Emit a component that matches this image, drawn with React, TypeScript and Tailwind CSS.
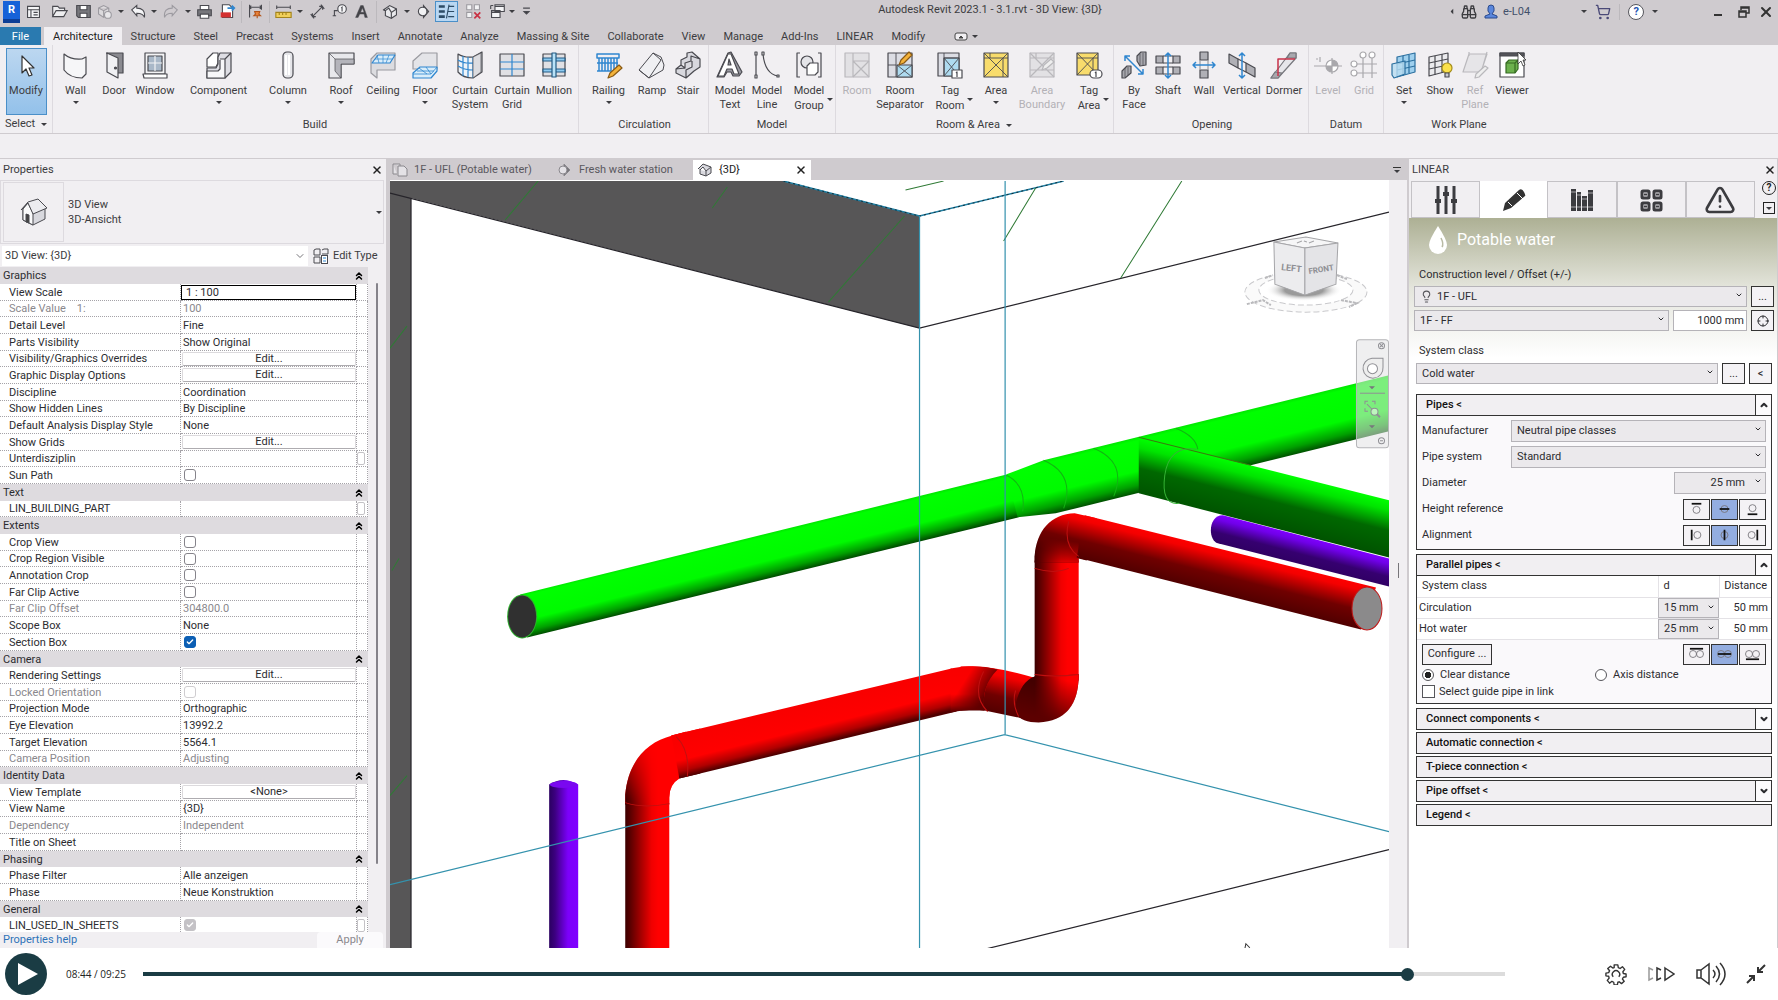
import { useState, type ReactNode } from "react";
import { Check, ChevronsUp, ChevronDown, ChevronUp, X, TriangleAlert, Lightbulb, Crosshair, ShoppingCart, Binoculars } from "lucide-react";

const INK = "#4a4a50";
const BLUE = "#2f86cf";
const PALE = "#d9edfa";

/* ---------- ribbon icons, all on a 28 x 28 grid ---------- */

const icons: Record<string, ReactNode> = {
  modify: <path d="M10 4v17l4-4 3 7 3-1-3-7h5z" fill="#fff" stroke="#333" />,
  wall: <path d="M2 3q7 6 18 5l4-2v17l-4 4Q8 27 2 19z" fill="#f6f6f8" />,
  door: (
    <>
      <path d="M6 2h17v20h-5" fill="#8a8a90" />
      <path d="M7 2l11 5v20L7 21z" fill="#f0f0f3" />
      <circle cx="15.500" cy="17" r="1" fill={INK} />
    </>
  ),
  window: (
    <>
      <path d="M4 2h20v21H4z" fill="#f4f4f6" />
      <path d="M7 5h14v15H7z" fill="#a9b8c8" />
      <path d="M14 5v15M7 12h14" stroke="#f4f4f6" />
      <path d="M2 23h24v4H3z" fill="#fff" />
    </>
  ),
  component: (
    <>
      <path d="M8 2h5v10l-2 4H2V8z" fill="#fff" />
      <path d="M15 2h11v19l-6 6H2V17h9l2-4V6z" fill="#dedee4" />
      <path d="M15 9v9l-2 2H2v7h18V8h-5M20 8l6-6" fill="#f7f7f9" />
    </>
  ),
  column: (
    <>
      <rect x="9" y="1" width="10" height="26" rx="4" fill="#e6e6ea" />
      <path d="M12 4v20M15 4v20" stroke="#fff" strokeWidth="2" />
    </>
  ),
  roof: (
    <>
      <path d="M2 2h25v11H14v14H2z" fill="#e8e8ec" />
      <path d="M2 2l6 6h19v5H14v14l-6-7V8" fill="#b4b4bb" strokeWidth="0.7" />
    </>
  ),
  ceiling: (
    <>
      <path d="M2 8l6-6h18v17H8v8l-6-5z" fill="#dcdce0" stroke="#9a9aa0" />
      <path d="M3 12L9 4h17l-5 8z" fill={PALE} stroke={BLUE} />
      <path d="M8 4l2 8M14 4v8M20 4l-3 8M6 8h17" stroke={BLUE} strokeWidth="0.7" />
    </>
  ),
  floor: (
    <>
      <path d="M2 10l9-8h15v16H2z" fill="#e4e4e8" stroke="#9a9aa0" />
      <path d="M2 25v-3l7-6h17v4l-6 7H2z" fill={PALE} stroke={BLUE} />
      <path d="M2 23h18l6-7M8 17l8 6M15 16l5 7M6 20h17" stroke={BLUE} strokeWidth="0.8" />
    </>
  ),
  curtainSystem: (
    <>
      <path d="M2 3q6 4 15 3l9-5v20l-9 6Q7 27 2 21z" fill="#eef3f8" />
      <path d="M7 5v20M12 6v20M17 6v21M2 9q6 4 15 3M2 15q6 4 15 4" stroke={BLUE} />
      <path d="M17 6l8-4v19l-8 6z" fill="#dcdce0" strokeWidth="0.7" />
    </>
  ),
  curtainGrid: (
    <>
      <path d="M2 3h24v22H2z" fill="#e0e0e4" />
      <path d="M14 3v22M2 11h24M2 18h24" stroke={BLUE} />
    </>
  ),
  mullion: (
    <>
      <path d="M3 3h22v22H3z" fill="#e0e0e4" />
      <path d="M3 7h22v3H3zM3 18h22v3H3z" fill="#8dcaf0" stroke="#245b84" />
      <path d="M12 2h4v24h-4z" fill="#b8e2f8" stroke="#245b84" />
    </>
  ),
  railing: (
    <>
      <path d="M2 3h22v4H2zM4 7v13M7 7v13M10 7v13M13 7v13M16 7v13M19 7v13M22 7v10M2 20h14M2 12h21" stroke={BLUE} strokeWidth="1.500" />
      <path d="M13 27l2-5 9-8 3 3-9 8z" fill="#f3b23a" stroke="#8a5a14" />
    </>
  ),
  ramp: <path d="M1 19L15 2l8 4 3 8-1 5-14 8zM1 19l10 8M15 2l8 7-12 18" fill="#f0f0f3" strokeWidth="1" />,
  stair: <path d="M2 18l5-4v-5l6-3V2l5-1 8 7v8l-6 4-8 7-10-5zM7 14l4 3v-5l6-2V5l9 3M11 17l-9 1M12 27v-8l6-3v-6" fill="#d8d8de" />,
  modelText: (
    <>
      <path d="M15 1l11 20-3 4h-6l-2-4h-4l-3 5H1L12 2z" fill="#9a9aa2" />
      <path d="M12 3h3l8 20h-5l-2-5h-5l-3 7H2zM12 14h3l-2-6z" fill="#fff" fillRule="evenodd" />
    </>
  ),
  modelLine: (
    <>
      <path d="M3 3v22M10 3q2 20 15 22" />
      <path d="M2 1h2v3H2zM2 24h2v3H2zM9 1h2v3H9zM24 24h2v2h-2z" fill="#fff" />
    </>
  ),
  modelGroup: (
    <>
      <path d="M5 2H2v24h3M23 2h3v24h-3" />
      <circle cx="12" cy="11" r="6" fill="#e4e4e8" />
      <path d="M12 15l3-3h8v9l-3 3h-8z" fill="#fff" />
    </>
  ),
  room: (
    <>
      <path d="M2 2h24v24H2z" fill="#e2e1e4" stroke="#b9b8bc" />
      <path d="M10 2v24M10 10h16M10 10l16 16M26 10L10 26" stroke="#b9b8bc" />
    </>
  ),
  roomSeparator: (
    <>
      <path d="M2 2h24v24H2z" fill="#dcdde4" />
      <path d="M11 14h15v12H11z" fill="#aedbf0" />
      <path d="M10 2v24M2 14h8M11 26l15-12M11 14l15 12" strokeWidth="0.9" />
      <path d="M13 14l2-5 8-8 3 3-8 8z" fill="#f3b23a" stroke="#8a5a14" />
    </>
  ),
  tagRoom: (
    <>
      <path d="M2 2h21v23H2z" fill="#dcdde4" />
      <path d="M8 7h15v18H8z" fill="#aedbf0" />
      <path d="M8 2v23M8 7h15M8 25L23 7M8 7l15 18" strokeWidth="0.9" />
      <rect x="16" y="19" width="10" height="8" fill="#fff" />
      <path d="M20 22l1-1v5" />
    </>
  ),
  area: (
    <>
      <path d="M2 2h24v24H2z" fill="#f8dc6c" />
      <path d="M2 2l24 24M26 2L2 26M2 7h24M8 2v5M21 7v19" strokeWidth="0.9" />
    </>
  ),
  areaBoundary: (
    <>
      <path d="M2 2h24v24H2z" fill="#e2e1e4" stroke="#b9b8bc" />
      <path d="M2 2l24 24M26 2L2 26M2 7h24M2 19h24M8 2v5" stroke="#b9b8bc" />
      <path d="M14 19l2-5 7-6 3 3-7 6z" fill="#eee" stroke="#b9b8bc" />
    </>
  ),
  tagArea: (
    <>
      <path d="M2 2h21v22H2z" fill="#f8dc6c" />
      <path d="M2 2l21 22M23 2L2 24M2 7h21M18 7v17" strokeWidth="0.9" />
      <rect x="15" y="19" width="12" height="8" rx="4" fill="#fff" />
      <path d="M20 22l1-1v5" />
    </>
  ),
  byFace: (
    <>
      <path d="M17 10V5l4-4h5v13l-6 1zM2 20l5-5h4v7l-6 5H2z" fill="#a8a8ae" />
      <path d="M20 3v11M23 2v12M5 17v9M8 16v8" strokeWidth="0.7" />
      <path d="M5 5l18 18M5 10V5h5M18 23h5v-5" stroke={BLUE} strokeWidth="1.500" />
    </>
  ),
  shaft: (
    <>
      <path d="M2 5h7v7H2zM19 5h7v7h-7zM2 16h7v7H2zM19 16h7v7h-7z" fill="#b0b0b6" />
      <path d="M9 5h10M9 12h10M9 16h10M9 23h10" />
      <path d="M14 2v25M11 5l3-3 3 3M11 24l3 3 3-3" stroke={BLUE} strokeWidth="1.500" />
    </>
  ),
  openWall: (
    <>
      <path d="M10 1h8v8h-8zM10 19h8v8h-8z" fill="#b0b0b6" />
      <path d="M10 9v10M18 9v10" stroke="#9a9aa0" />
      <path d="M3 14h22M6 11l-3 3 3 3M22 11l3 3-3 3" stroke={BLUE} strokeWidth="1.500" />
    </>
  ),
  vertical: (
    <>
      <path d="M1 3l9 5v9l-9-5zM18 12l9 5v9l-9-5z" fill="#b0b0b6" />
      <path d="M10 8l8 4M10 17l8 4" />
      <path d="M14 2v25M11 5l3-3 3 3M11 24l3 3 3-3" stroke={BLUE} strokeWidth="1.500" />
    </>
  ),
  dormer: (
    <>
      <path d="M1 27L20 2h6v5L8 27z" fill="#e6e6ea" stroke="#77777d" />
      <path d="M20 2h6v5h-9zM1 27l4-6 7 1-4 5z" fill="#a8a8ae" stroke="#77777d" />
      <path d="M8 25V8h17" stroke="#c8324a" strokeWidth="1.500" />
    </>
  ),
  level: (
    <>
      <circle cx="18" cy="15" r="6" fill="#fff" stroke="#a9a8ac" />
      <path d="M18 9v12a6 6 0 0 1-6-6h12a6 6 0 0 0-6-6z" fill="#a9a8ac" stroke="none" />
      <path d="M0 15h28M18 7v16M2 8h2M6 6v5" stroke="#a9a8ac" />
    </>
  ),
  grid: (
    <>
      <path d="M13 7v20M22 7v20M7 13h20M7 22h20" stroke="#a9a8ac" />
      <g fill="#fff" stroke="#a9a8ac">
        <circle cx="13" cy="4" r="3" />
        <circle cx="22" cy="4" r="3" />
        <circle cx="4" cy="13" r="3" />
        <circle cx="4" cy="22" r="3" />
      </g>
    </>
  ),
  set: (
    <>
      <path d="M7 6l18-4v19L7 26z" fill="#9fd0ee" stroke="#2b6f9f" />
      <path d="M13 5v20M19 4v18M7 13l18-4M7 19l18-4" stroke="#2b6f9f" />
      <path d="M2 13l13-3v13L4 27l-2-3z" fill="#b9dcf0" stroke="#2b6f9f" fillOpacity="0.800" />
    </>
  ),
  show: (
    <>
      <path d="M3 6l19-4v18L3 25z" fill="#ebebee" />
      <path d="M9 5v19M16 3v19M3 12l19-4M3 18l19-4" />
      <circle cx="21" cy="17" r="5" fill="#fbe14a" stroke="#a58d1c" />
      <path d="M19 22h4v4h-4z" fill="#c9c9ce" />
    </>
  ),
  refPlane: (
    <>
      <path d="M8 3h18l-6 18H2zM8 1v4M26 1L20 22" fill="#e6e5e8" stroke="#b9b8bc" />
      <path d="M14 27l1-4 9-8 3 2-9 9z" fill="#eee" stroke="#b9b8bc" />
    </>
  ),
  viewer: (
    <>
      <path d="M2 2h24v24H2z" fill="#fff" />
      <path d="M2 2h24v3H2z" fill="#55555a" />
      <path d="M8 12l3-3h9v9l-3 4H8z" fill="#6cb14d" stroke="#356a22" />
      <path d="M17 22V12h-9M17 12l3-3" stroke="#356a22" />
      <path d="M20 1v12l3-3 2 5 2-1-2-5h3z" fill="#fff" stroke="#333" strokeWidth="0.800" />
    </>
  ),
};

function Glyph({ name }: { name: string }) {
  return (
    <svg viewBox="0 0 28 28" className="w-7 h-7 shrink-0" fill="none" stroke={INK} strokeWidth="1.200" strokeLinejoin="round">
      {icons[name]}
    </svg>
  );
}

function Caret({ className = "" }: { className?: string }) {
  return (
    <svg viewBox="0 0 8 4" className={`w-[6px] h-[3px] ${className}`} fill="#3c3c40">
      <path d="M0 0h8L4 4z" />
    </svg>
  );
}

/* ---------- title bar ---------- */

interface QuickItem {
  name: string;
  width: string;
  art?: ReactNode;
  active?: boolean;
}

const gray = "#9c9aa0";

const quickItems: QuickItem[] = [
  { name: "Home", width: "w-[23px]", art: <><path d="M3 4h14v13H3zM3 8h14" fill="#f5f5f7" /><path d="M7 8v9M10 11h5M10 14h5" /></> },
  { name: "Open", width: "w-[29px]", art: <path d="M2 16V4h6l2 2h6v3M2 16L6 9h13l-4 7z" fill="#eeeef0" /> },
  { name: "Save", width: "w-[18px]", art: <><path d="M2 3h16v14H4l-2-2z" fill="#77777c" /><path d="M6 3h8v5H6zM6 12h8v5H6z" fill="#fff" /></> },
  { name: "Sync", width: "w-[24px]", art: <><path d="M3 6l6-3 6 3v7l-6 4-6-4zM3 6l6 3 6-3M9 9v8" stroke={gray} fill="#dcdadd" /><circle cx="14" cy="14" r="4" stroke={gray} fill="#e8e7ea" /></> },
  { name: "caret", width: "w-[9px]" },
  { name: "Undo", width: "w-[26px]", art: <path d="M2 8l6-5v3c6 0 10 3 9 11-1-4-4-5-9-5v3z" fill="#f5f5f7" /> },
  { name: "caret", width: "w-[6px]" },
  { name: "Redo", width: "w-[27px]", art: <path d="M18 8l-6-5v3C6 6 2 9 3 17c1-4 4-5 9-5v3z" stroke={gray} /> },
  { name: "caret", width: "w-[7px]" },
  { name: "Print", width: "w-[27px]", art: <><path d="M5 3h10v5H5zM5 13h10v5H5z" fill="#fff" /><path d="M2 8h16v7h-3v-2H5v2H2z" fill="#77777c" /></> },
  { name: "Export PDF", width: "w-[18px]", art: <><path d="M4 2h8l4 4v11H4z" fill="#fff" /><path d="M2 11h12v6H2z" fill="#d42f2f" stroke="none" /><path d="M10 6h7M15 3l3 3-3 3" stroke={BLUE} strokeWidth="2" /></> },
  { name: "sep", width: "w-[10px]" },
  { name: "Aligned Dimension", width: "w-[18px]", art: <><path d="M3 2v15M17 2v6M3 5h14M5 3L3 5l2 2M15 3l2 2-2 2" /><path d="M9 10h6l-1 3 2 2H8l2-2zM12 15v3" fill="#e8823a" stroke="#b3541a" /></> },
  { name: "sep", width: "w-[10px]" },
  { name: "Measure", width: "w-[19px]", art: <><path d="M2 5h16M2 3v4M18 3v4" /><path d="M1 11h18v6H1z" fill="#f0cf5a" stroke="#a3831c" /><path d="M5 11v3M9 11v3M13 11v3" stroke="#a3831c" /></> },
  { name: "caret", width: "w-[13px]" },
  { name: "Linear Dimension", width: "w-[22px]", art: <path d="M4 16L16 4M4 12v4h4M12 4h4v4M2 13l4 5M14 2l4 5" /> },
  { name: "Tag", width: "w-[22px]", art: <><circle cx="13" cy="7" r="5" fill="#f5f5f7" /><path d="M12 6l1-1v5M8 9H4v6M2 15h4" /></> },
  { name: "Text", width: "w-[22px]", art: <path d="M3 17L9 3h3l5 14h-3l-1-4H8l-2 4zM9 11h4l-2-5z" fill="#444448" fillRule="evenodd" strokeWidth="0.5" /> },
  { name: "sep", width: "w-[9px]" },
  { name: "3D View", width: "w-[19px]", art: <><path d="M2 8l7-5 8 4v7l-6 4-7-3V9z" fill="#e9e9ec" /><path d="M2 8l2 1 4-3 3 5 6-4M11 11v7" /></> },
  { name: "caret", width: "w-[13px]" },
  { name: "Section", width: "w-[20px]", art: <><path d="M10 3l6 7-6 7z" fill="#77777c" /><circle cx="9" cy="10" r="5" fill="#f1f1f3" /></> },
  { name: "Thin Lines", width: "w-[26px]", active: true, art: <><path d="M1 4h7M1 10h7M1 16h7" strokeWidth="3" stroke="#2d4c66" /><path d="M10 18l3-16M13 4h6M12 10h7M12 16h7" stroke="#2d4c66" /></> },
  { name: "Close Inactive", width: "w-[29px]", art: <><path d="M2 2h6v6H2zM11 2h6v6h-6zM2 11h6v6H2z" fill="#f3f3f5" stroke={gray} /><path d="M11 11l7 7M18 11l-7 7" stroke="#c83244" strokeWidth="2" /></> },
  { name: "Switch Windows", width: "w-[19px]", art: <path d="M7 2h11v8H7zM7 4h11M3 9h10v8H3zM3 11h10M2 3v4M2 3h3" fill="#f3f3f5" /> },
  { name: "caret", width: "w-[10px]" },
  { name: "Customize", width: "w-[18px]", art: <path d="M6 6h8M7 10h6l-3 3z" fill="#3c3c40" /> },
];

function TitleBar() {
  return (
    <header className="flex h-[27px] items-center">
      <div className="flex items-center pb-1">
        <button aria-label="Revit" className="mr-[2px] ml-[3px] h-[22px] w-[17px] bg-[#1662d8] border-b-4 border-[#0d3f96] text-[11px] leading-[18px] font-bold text-white">
          R
        </button>
        {quickItems.map((item, i) => {
          if (item.name === "sep") return <span key={i} className={`${item.width} flex justify-center`}><i className="h-[22px] w-px bg-[#bcb9bd]" /></span>;
          if (item.name === "caret") return <span key={i} className={`${item.width} flex justify-center`}><Caret /></span>;
          return (
            <button key={i} aria-label={item.name} className={`${item.width} flex justify-center`}>
              <span className={item.active ? "border border-[#4a8fc8] bg-[#b9d7f2] px-[2px] py-px" : ""}>
                <svg viewBox="0 0 20 20" className="w-[17px] h-[17px]" fill="none" stroke={INK} strokeWidth="1.300">{item.art}</svg>
              </span>
            </button>
          );
        })}
      </div>
      <h1 className="mb-2 flex-1 text-center">Autodesk Revit 2023.1 - 3.1.rvt - 3D View: {"{3D}"}</h1>
      <div className="flex w-[333px] items-center pr-1 mb-1">
        <Caret className="ml-1 rotate-90" />
        <button aria-label="Search" className="ml-[6px]"><Binoculars className="w-4 h-4" /></button>
        <button className="ml-[6px] flex items-center gap-1 text-[#42506a]">
          <svg viewBox="0 0 16 16" className="w-4 h-4" fill="#5a86dc" stroke="#2b4a8c">
            <path d="M5 4a3 3 0 0 1 6 0v3L9 10l5 2v2H2v-2l5-2-2-3z" />
          </svg>
          e-L04
        </button>
        <Caret className="ml-[51px]" />
        <button aria-label="App Store" className="ml-2"><ShoppingCart className="w-4 h-4 text-[#4b4a78]" /></button>
        <i className="mx-2 h-4 w-px bg-[#bcb9bd]" />
        <button aria-label="Help" className="flex h-4 w-4 items-center justify-center rounded-full border border-[#55555c] bg-white text-[11px] font-bold text-[#2456b4]">?</button>
        <Caret className="ml-2" />
        <button aria-label="Minimize" className="ml-auto flex h-4 w-4 items-end pb-1"><i className="h-[2px] w-2 bg-[#333]" /></button>
        <button aria-label="Restore" className="ml-[7px]">
          <svg viewBox="0 0 14 14" className="w-[14px] h-[14px]" fill="none" stroke="#333" strokeWidth="1.500"><path d="M4 5V2h8v6H9M2 6h7v6H2zM2 7h7M4 3h8" /></svg>
        </button>
        <button aria-label="Close" className="ml-[7px]"><X className="w-4 h-4 text-[#333]" strokeWidth={3} /></button>
      </div>
    </header>
  );
}

/* ---------- ribbon ---------- */

const ribbonTabs = ["Structure", "Steel", "Precast", "Systems", "Insert", "Annotate", "Analyze", "Massing & Site", "Collaborate", "View", "Manage", "Add-Ins", "LINEAR", "Modify"];

interface Tool {
  icon: string;
  label: string;
  second?: string;
  width: string;
  menu?: boolean;
  off?: boolean;
}

interface Panel {
  title: string;
  pad: string;
  menu?: boolean;
  tools: Tool[];
}

const panels: Panel[] = [
  {
    title: "Build",
    pad: "pl-[3px] pr-1",
    tools: [
      { icon: "wall", label: "Wall", width: "w-[39px]", menu: true },
      { icon: "door", label: "Door", width: "w-[38px]" },
      { icon: "window", label: "Window", width: "w-[44px]" },
      { icon: "component", label: "Component", width: "w-[83px]", menu: true },
      { icon: "column", label: "Column", width: "w-[56px]", menu: true },
      { icon: "roof", label: "Roof", width: "w-[50px]", menu: true },
      { icon: "ceiling", label: "Ceiling", width: "w-[34px]" },
      { icon: "floor", label: "Floor", width: "w-[50px]", menu: true },
      { icon: "curtainSystem", label: "Curtain", second: "System", width: "w-[40px]" },
      { icon: "curtainGrid", label: "Curtain", second: "Grid", width: "w-[44px]" },
      { icon: "mullion", label: "Mullion", width: "w-[40px]" },
    ],
  },
  {
    title: "Circulation",
    pad: "pl-[7px] pr-[5px]",
    tools: [
      { icon: "railing", label: "Railing", width: "w-[45px]", menu: true },
      { icon: "ramp", label: "Ramp", width: "w-[42px]" },
      { icon: "stair", label: "Stair", width: "w-[30px]" },
    ],
  },
  {
    title: "Model",
    pad: "px-[2px]",
    tools: [
      { icon: "modelText", label: "Model", second: "Text", width: "w-[38px]" },
      { icon: "modelLine", label: "Model", second: "Line", width: "w-[36px]" },
      { icon: "modelGroup", label: "Model", second: "Group", width: "w-[48px]", menu: true },
    ],
  },
  {
    title: "Room & Area",
    pad: "pl-[2px] pr-[3px]",
    menu: true,
    tools: [
      { icon: "room", label: "Room", width: "w-[38px]", off: true },
      { icon: "roomSeparator", label: "Room", second: "Separator", width: "w-[48px]" },
      { icon: "tagRoom", label: "Tag", second: "Room", width: "w-[52px]", menu: true },
      { icon: "area", label: "Area", width: "w-[40px]", menu: true },
      { icon: "areaBoundary", label: "Area", second: "Boundary", width: "w-[52px]", off: true },
      { icon: "tagArea", label: "Tag", second: "Area", width: "w-[42px]", menu: true },
    ],
  },
  {
    title: "Opening",
    pad: "pl-1 pr-[2px]",
    tools: [
      { icon: "byFace", label: "By", second: "Face", width: "w-[32px]" },
      { icon: "shaft", label: "Shaft", width: "w-[36px]" },
      { icon: "openWall", label: "Wall", width: "w-[36px]" },
      { icon: "vertical", label: "Vertical", width: "w-[40px]" },
      { icon: "dormer", label: "Dormer", width: "w-[44px]" },
    ],
  },
  {
    title: "Datum",
    pad: "px-px",
    tools: [
      { icon: "level", label: "Level", width: "w-[36px]", off: true },
      { icon: "grid", label: "Grid", width: "w-[36px]", off: true },
    ],
  },
  {
    title: "Work Plane",
    pad: "px-[2px]",
    tools: [
      { icon: "set", label: "Set", width: "w-[36px]", menu: true },
      { icon: "show", label: "Show", width: "w-[36px]" },
      { icon: "refPlane", label: "Ref", second: "Plane", width: "w-[34px]", off: true },
      { icon: "viewer", label: "Viewer", width: "w-[40px]" },
    ],
  },
];

function ToolButton({ tool }: { tool: Tool }) {
  return (
    <button className={`${tool.width} flex flex-col items-center ${tool.off ? "text-[#b3b1b6]" : ""}`}>
      <Glyph name={tool.icon} />
      <span className="mt-[5px] leading-[14px] whitespace-nowrap">{tool.label}</span>
      {tool.second && (
        <span className="flex items-center leading-[14px]">
          {tool.second}
          {tool.menu && <Caret className="-mr-[9px] ml-[3px] mb-3" />}
        </span>
      )}
      {tool.menu && !tool.second && <Caret className="mt-[3px]" />}
    </button>
  );
}

function Ribbon() {
  return (
    <>
      <nav className="flex h-[18px] items-stretch leading-[17px]">
        <button className="w-[41px] bg-[#2a7ab0] text-white">File</button>
        <button className="ml-[3px] bg-[#f1eff2] px-[9px] text-[#222]">Architecture</button>
        {ribbonTabs.map((tab) => (
          <button key={tab} className="px-[9px]">{tab}</button>
        ))}
        <button aria-label="Ribbon display" className="ml-5 flex items-center gap-1">
          <svg viewBox="0 0 14 9" className="w-[14px] h-[9px]" fill="none" stroke="#444"><rect x="1" y="1" width="12" height="7" rx="2" fill="#f1eff2" /><path d="M5 6h4L7 4z" fill="#444" /></svg>
          <Caret />
        </button>
      </nav>
      <section className="flex h-[89px] border-b border-[#cfcbcf] bg-[#f1eff2]">
        <div className="flex w-[53px] flex-col items-center border-r border-[#dddadf] pt-[3px]">
          <button className="flex h-[67px] w-[41px] flex-col items-center border border-[#4a8fc8] bg-linear-to-b from-[#bcd7f0] to-[#93c1ea] pt-[3px]">
            <Glyph name="modify" />
            <span className="mt-1 leading-[14px]">Modify</span>
          </button>
          <button className="mt-[2px] flex items-center gap-[6px] leading-[14px]">Select <Caret /></button>
        </div>
        {panels.map((panel) => (
          <div key={panel.title} className={`flex flex-col ${panel.title === "Work Plane" ? "" : "border-r border-[#dddadf]"} ${panel.pad} pt-[6px]`}>
            <div className="flex h-[67px] items-start">
              {panel.tools.map((tool) => <ToolButton key={tool.icon} tool={tool} />)}
            </div>
            <button className="flex items-center justify-center gap-[6px] leading-[14px]">
              {panel.title}
              {panel.menu && <Caret />}
            </button>
          </div>
        ))}
      </section>
      <div className="h-6 bg-[#f1eff2]" />
    </>
  );
}

/* ---------- properties palette ---------- */

type Kind = "group" | "text" | "button" | "check" | "scale";

interface Row {
  name: string;
  kind: Kind;
  value?: string;
  dim?: boolean;
  on?: boolean;
  more?: boolean;
}

const rows: Row[] = [
  { name: "Graphics", kind: "group" },
  { name: "View Scale", kind: "scale", value: "1 : 100" },
  { name: "Scale Value    1:", kind: "text", value: "100", dim: true },
  { name: "Detail Level", kind: "text", value: "Fine" },
  { name: "Parts Visibility", kind: "text", value: "Show Original" },
  { name: "Visibility/Graphics Overrides", kind: "button", value: "Edit..." },
  { name: "Graphic Display Options", kind: "button", value: "Edit..." },
  { name: "Discipline", kind: "text", value: "Coordination" },
  { name: "Show Hidden Lines", kind: "text", value: "By Discipline" },
  { name: "Default Analysis Display Style", kind: "text", value: "None" },
  { name: "Show Grids", kind: "button", value: "Edit..." },
  { name: "Unterdisziplin", kind: "text", more: true },
  { name: "Sun Path", kind: "check" },
  { name: "Text", kind: "group" },
  { name: "LIN_BUILDING_PART", kind: "text", more: true },
  { name: "Extents", kind: "group" },
  { name: "Crop View", kind: "check" },
  { name: "Crop Region Visible", kind: "check" },
  { name: "Annotation Crop", kind: "check" },
  { name: "Far Clip Active", kind: "check" },
  { name: "Far Clip Offset", kind: "text", value: "304800.0", dim: true },
  { name: "Scope Box", kind: "text", value: "None" },
  { name: "Section Box", kind: "check", on: true },
  { name: "Camera", kind: "group" },
  { name: "Rendering Settings", kind: "button", value: "Edit..." },
  { name: "Locked Orientation", kind: "check", dim: true },
  { name: "Projection Mode", kind: "text", value: "Orthographic" },
  { name: "Eye Elevation", kind: "text", value: "13992.2" },
  { name: "Target Elevation", kind: "text", value: "5564.1" },
  { name: "Camera Position", kind: "text", value: "Adjusting", dim: true },
  { name: "Identity Data", kind: "group" },
  { name: "View Template", kind: "button", value: "<None>" },
  { name: "View Name", kind: "text", value: "{3D}" },
  { name: "Dependency", kind: "text", value: "Independent", dim: true },
  { name: "Title on Sheet", kind: "text" },
  { name: "Phasing", kind: "group" },
  { name: "Phase Filter", kind: "text", value: "Alle anzeigen" },
  { name: "Phase", kind: "text", value: "Neue Konstruktion" },
  { name: "General", kind: "group" },
  { name: "LIN_USED_IN_SHEETS", kind: "check", on: true, more: true },
];

function RowValue({ row }: { row: Row }) {
  if (row.kind === "scale") {
    return (
      <select aria-label={row.name} className="block h-[15px] w-full appearance-none border border-black bg-white px-1 leading-[13px]">
        <option>{row.value}</option>
      </select>
    );
  }
  if (row.kind === "button") {
    return <button aria-label={row.name} className="mx-px block h-[14px] w-[174px] rounded-xs border border-[#dcdadd] border-b-[#aeacb0] bg-white leading-[12px]">{row.value}</button>;
  }
  if (row.kind === "check") {
    const locked = row.name.startsWith("LIN");
    return (
      <span className="ml-[3px] grid h-3 w-3">
        <input
          type="checkbox"
          aria-label={row.name}
          defaultChecked={row.on}
          disabled={row.dim || locked}
          className={`col-start-1 row-start-1 h-3 w-3 appearance-none rounded-[3px] border ${row.dim ? "border-[#cfcdd0]" : "border-[#85838a]"} checked:border-[#0c5fb4] checked:bg-[#0c5fb4] disabled:checked:border-[#c4c2c6] disabled:checked:bg-[#c4c2c6]`}
        />
        {row.on && <Check className="pointer-events-none col-start-1 row-start-1 m-[2px] h-2 w-2 text-white" strokeWidth={4} />}
      </span>
    );
  }
  return <span className="pl-[2px]">{row.value}</span>;
}

function Properties() {
  return (
    <aside className="flex w-[390px] shrink-0 flex-col border-r-4 border-[#cfcbcf] bg-[#f1eff2]">
      <div className="flex h-[21px] items-center justify-between pr-[3px] pl-[3px]">
        <h2>Properties</h2>
        <button aria-label="Close properties"><X className="h-3 w-3 text-[#222]" strokeWidth={3} /></button>
      </div>
      <button className="mr-[2px] flex h-16 items-center border border-[#dddadf] pr-px text-left">
        <span className="ml-[2px] flex h-[60px] w-[61px] items-center justify-center border border-[#dddadf]">
          <svg viewBox="0 0 28 28" className="h-7 w-7" fill="none" stroke={INK}>
            <path d="M3 11v11l10 5 12-6V10" fill="#d8d8de" />
            <path d="M13 15v12L3 22V11l5-6z" fill="#fafafb" />
            <path d="M1 12L8 4l10-3 9 9-14 6L8 5z" fill="#ececf0" />
            <path d="M6 16l3 1v8l-3-1z" fill="#444" />
          </svg>
        </span>
        <span className="ml-1 flex-1 text-[11px] leading-[15px]">3D View<br />3D-Ansicht</span>
        <Caret />
      </button>
      <div className="flex h-[23px] items-center">
        <div className="relative ml-[2px] w-[306px]">
          <select aria-label="View instance" className="h-5 w-full appearance-none bg-white px-[3px]">
            <option>3D View: {"{3D}"}</option>
          </select>
          <ChevronDown className="pointer-events-none absolute top-1 right-[2px] h-3 w-3 text-[#77757a]" />
        </div>
        <button className="ml-[5px] flex items-center gap-1">
          <svg viewBox="0 0 16 16" className="h-4 w-4" fill="none" stroke={INK}>
            <path d="M1 2l2-1h4v6H1zM9 2l2-1h4v5H9M1 9h6v6H1z" />
            <rect x="8.500" y="7.500" width="6" height="8" fill="#fff" />
            <path d="M10 10h3M10 13h3" stroke={BLUE} />
          </svg>
          Edit Type
        </button>
      </div>
      <div className="flex min-h-0 flex-1 overflow-hidden">
        <div className="overflow-hidden">
          <table className="w-[368px] table-fixed border-separate border-spacing-0 bg-white leading-[15px] text-[#2c2c30]">
            <colgroup>
              <col className="w-[181px]" />
              <col className="w-[176px]" />
              <col className="w-[11px]" />
            </colgroup>
            <tbody>
              {rows.map((row) =>
                row.kind === "group" ? (
                  <tr key={row.name} className="h-[17px] bg-[#dedbdf] nth-[3n]:h-4">
                    <th colSpan={3} scope="colgroup" className="p-0 pr-[3px] pl-[3px] text-left font-normal">
                      <span className="flex items-center justify-between">
                        {row.name}
                        <button aria-label={`Collapse ${row.name}`}><ChevronsUp className="h-3 w-3 text-black" strokeWidth={3} /></button>
                      </span>
                    </th>
                  </tr>
                ) : (
                  <tr key={row.name} className={`h-[17px] nth-[3n]:h-4 ${row.dim ? "text-[#8a888d]" : ""}`}>
                    <th scope="row" className="border-r border-b border-dotted border-[#a5a3a8] p-0 pl-[9px] text-left font-normal whitespace-pre">{row.name}</th>
                    <td className="border-r border-b border-dotted border-[#a5a3a8] p-0"><RowValue row={row} /></td>
                    <td className="border-r border-b border-dotted border-[#a5a3a8] p-0">
                      {row.more && <button aria-label={`Browse ${row.name}`} className="block h-[13px] w-2 rounded-xs border border-[#c4c2c6] bg-white" />}
                    </td>
                  </tr>
                )
              )}
            </tbody>
          </table>
        </div>
        <div className="mt-4 mb-[68px] ml-2 w-[2px] rounded-full bg-[#85838a]" />
      </div>
      <div className="flex h-4 items-start justify-between pr-[3px] pl-[3px]">
        <a href="#help" className="leading-4 text-[#2f73b8]">Properties help</a>
        <button className="h-4 w-[66px] rounded-t-sm bg-[#fbfafc] leading-4 text-[#8a888d]">Apply</button>
      </div>
    </aside>
  );
}

/* ---------- 3D view ---------- */

function Stops({ list }: { list: [number, string][] }) {
  return (
    <>
      {list.map(([offset, color]) => <stop key={offset} offset={offset} stopColor={color} />)}
    </>
  );
}

const GREEN: [number, string][] = [[0, "#00e800"], [0.06, "#00ff00"], [0.6, "#00fa00"], [0.85, "#00a000"], [1, "#004c00"]];
const GREEN_DARK: [number, string][] = [[0, "#00ff00"], [0.18, "#00e400"], [0.55, "#006800"], [1, "#005400"]];
const RED: [number, string][] = [[0, "#f80000"], [0.6, "#ff0000"], [0.85, "#b00000"], [1, "#500000"]];
const RED_DARK: [number, string][] = [[0, "#ff0000"], [0.15, "#f40000"], [0.6, "#700000"], [1, "#520000"]];
const RED_UP: [number, string][] = [[0, "#3c0000"], [0.12, "#5c0000"], [0.6, "#f00000"], [0.75, "#ff0000"], [1, "#ff0000"]];

function Scene() {
  return (
    <svg viewBox="390 181 998 767" preserveAspectRatio="xMinYMin slice" className="h-full w-full" role="img" aria-label="3D pipe model" fill="none">
      <defs>
        <linearGradient id="g1" gradientUnits="userSpaceOnUse" x1="760" y1="535" x2="770.400" y2="577.400"><Stops list={GREEN} /></linearGradient>
        <linearGradient id="g2" gradientUnits="userSpaceOnUse" x1="1300" y1="397" x2="1313" y2="450"><Stops list={GREEN} /></linearGradient>
        <linearGradient id="g3" gradientUnits="userSpaceOnUse" x1="1260" y1="468" x2="1247" y2="520"><Stops list={GREEN_DARK} /></linearGradient>
        <linearGradient id="r1" gradientUnits="userSpaceOnUse" x1="1200" y1="543" x2="1189.400" y2="585.400"><Stops list={RED_DARK} /></linearGradient>
        <linearGradient id="r2" gradientUnits="userSpaceOnUse" x1="800" y1="703" x2="810.400" y2="745"><Stops list={RED} /></linearGradient>
        <linearGradient id="r3" gradientUnits="userSpaceOnUse" x1="625" y1="0" x2="669" y2="0"><Stops list={RED_UP} /></linearGradient>
        <linearGradient id="r4" gradientUnits="userSpaceOnUse" x1="1034" y1="0" x2="1078" y2="0"><Stops list={RED_UP} /></linearGradient>
        <linearGradient id="r5" gradientUnits="userSpaceOnUse" x1="1010" y1="671" x2="1000" y2="714"><Stops list={RED_DARK} /></linearGradient>
        <linearGradient id="r6" gradientUnits="userSpaceOnUse" x1="0" y1="666" x2="0" y2="712"><Stops list={RED} /></linearGradient>
        <linearGradient id="p1" gradientUnits="userSpaceOnUse" x1="549" y1="0" x2="578" y2="0"><Stops list={[[0, "#2a0060"], [0.2, "#3c0080"], [0.65, "#7c00fa"], [1, "#8000ff"]]} /></linearGradient>
        <linearGradient id="p2" gradientUnits="userSpaceOnUse" x1="1300" y1="535" x2="1293" y2="562"><Stops list={[[0, "#8000ff"], [0.2, "#7000e8"], [0.65, "#360070"], [1, "#300064"]]} /></linearGradient>
        <linearGradient id="f1" gradientUnits="userSpaceOnUse" x1="668" y1="744" x2="652" y2="806"><stop offset="0" stopColor="#000" /><stop offset="1" stopColor="#fff" /></linearGradient>
        <linearGradient id="f2" gradientUnits="userSpaceOnUse" x1="1040" y1="718" x2="1052" y2="676"><stop offset="0" stopColor="#000" /><stop offset="1" stopColor="#fff" /></linearGradient>
        <linearGradient id="f3" gradientUnits="userSpaceOnUse" x1="1066" y1="540" x2="1062" y2="566"><stop offset="0" stopColor="#000" /><stop offset="1" stopColor="#fff" /></linearGradient>
        <linearGradient id="f4" gradientUnits="userSpaceOnUse" x1="964" y1="680" x2="986" y2="694"><stop offset="0" stopColor="#000" /><stop offset="1" stopColor="#fff" /></linearGradient>
        <mask id="m1" maskUnits="userSpaceOnUse" x="380" y="170" width="1020" height="790"><path d="M380 170h1020v790H380z" fill="url(#f1)" /></mask>
        <mask id="m2" maskUnits="userSpaceOnUse" x="380" y="170" width="1020" height="790"><path d="M380 170h1020v790H380z" fill="url(#f2)" /></mask>
        <mask id="m3" maskUnits="userSpaceOnUse" x="380" y="170" width="1020" height="790"><path d="M380 170h1020v790H380z" fill="url(#f3)" /></mask>
        <mask id="m4" maskUnits="userSpaceOnUse" x="380" y="170" width="1020" height="790"><path d="M380 170h1020v790H380z" fill="url(#f4)" /></mask>
        <radialGradient id="shade"><stop offset="0.500" stopColor="#9a9a9a" /><stop offset="1" stopColor="#fff" stopOpacity="0" /></radialGradient>
      </defs>
      <path d="M380 170h1020v790H380z" fill="#fff" />

      {/* slab and wall */}
      <path d="M390 181H783L919 216V328L411 198V948H390z" fill="#575657" />
      <path d="M390 193L919 328L1388 212M411 198V948M986 948L1388 849" stroke="#26242a" strokeWidth="1.200" />
      <path d="M783 181L919 216L1063 181" stroke="#1f7fa3" strokeWidth="1.500" />
      <path d="M783 181L919 216L1063 181" stroke="#12303c" strokeDasharray="2 3" />
      <path d="M505 220L538 181M712 208L727 187M828 302L904 216M390 348L407 326M392 570L399 558M390 795L407 775M905 190L943 181M1003 241L1035 188M1120 278L1181 181" stroke="#2f7a35" />

      {/* cold water */}
      <path d="M520 594L1007 474L1018 517L527 637z" fill="url(#g1)" />
      <path d="M1006 474L1043 460L1388 375V431L1055 513L1017 517z" fill="url(#g2)" />
      <ellipse cx="522" cy="616" rx="15" ry="22" fill="#2fae2f" />
      <ellipse cx="522" cy="616" rx="14" ry="21" fill="#303030" />
      <path d="M1006 475q20 10 16 36M1043 460q32 14 20 48M1093 448q34 14 20 48M1175 428q20 8 22 21" stroke="#12b412" />
      <path d="M1138 437L1388 500V557L1138 493z" fill="url(#g3)" />
      <path d="M1138 437L1250 465" stroke="#3a7a10" />
      <path d="M1196 449q-28-4-32 26t14 28" stroke="#35b435" />

      {/* circulation */}
      <path d="M1222 515L1388 558V586L1217 543C1207 540 1207 515 1222 515z" fill="url(#p2)" />
      <path d="M549 784q14-9 29 0V948H549z" fill="url(#p1)" />
      <ellipse cx="563.500" cy="784" rx="14" ry="3.500" fill="#7a08f0" />

      {/* hot water */}
      <path d="M1034 560H1078V680H1034z" fill="url(#r4)" />
      <path d="M1034 562V556C1036 530 1050 514 1074 513L1096 518L1086 560L1078 558V562z" fill="url(#r1)" />
      <path d="M1034 562V556C1036 530 1050 514 1074 513L1078 514V562z" fill="url(#r4)" mask="url(#m3)" />
      <path d="M1084 515L1375 587L1360 629L1076 557z" fill="url(#r1)" />
      <path d="M960 666Q990 664 1033 677L1063 707Q1047 726 1018 717L984 710H960z" fill="url(#r5)" />
      <path d="M1078 674q0 46-40 48-20 0-24-12 4-28 20-34z" fill="#5c0000" />
      <path d="M1078 674q0 46-40 48-20 0-24-12 4-28 20-34z" fill="url(#r4)" mask="url(#m2)" />
      <path d="M671 735L951 668L956 711L679 778z" fill="url(#r2)" />
      <path d="M950 668Q975 663 997 669Q980 686 984 710Q970 708 950 712z" fill="url(#r6)" />
      <path d="M950 668Q975 663 997 669Q980 686 984 710Q970 708 950 712z" fill="#600000" mask="url(#m4)" />
      <path d="M625 804V794C628 762 645 742 672 735L686 731L679 778Q669 784 669 797V804z" fill="#ff0000" />
      <path d="M671 735L700 728V773L679 778z" fill="url(#r2)" />
      <path d="M625 804V794C628 762 645 742 672 735L679 778Q669 784 669 797V804z" fill="url(#r3)" mask="url(#m1)" />
      <path d="M625 803H669V948H625z" fill="url(#r3)" />
      <ellipse cx="1366" cy="608" rx="15" ry="21.500" fill="#8b8a8b" stroke="#c01818" />
      <path d="M1068 521q-6 24 10 35M1034 568q20 6 34 0M1034 674q20 3 44 0M625 802q18 6 44 1M676 736q14 14 11 40M983 671q-12 24 4 40M1015 690q-4 12 3 26" stroke="#c01010" />

      {/* section box */}
      <path d="M919 216V948M1004.500 181V734M390 884L1004 734L1388 831" stroke="#3492ad" strokeWidth="1.200" />
      <path d="M1244 948l1-5 4 4" stroke="#333" />

      {/* view cube */}
      <g>
        <ellipse cx="1305" cy="292" rx="61" ry="20" fill="#fafafa" stroke="#c9c9cc" strokeDasharray="6 3" />
        <ellipse cx="1305" cy="290" rx="47" ry="15" fill="#fff" stroke="#c9c9cc" strokeDasharray="6 3" />
        <ellipse cx="1303" cy="290" rx="38" ry="11" fill="url(#shade)" />
        <path d="M1246 304l16-4 8 5M1340 300l16 3-8 4M1264 278l8-3M1336 275l10 4" stroke="#b9b9bc" strokeWidth="2" strokeDasharray="3 1" />
        <path d="M1273 242L1305 237L1337 243L1304 248z" fill="#f6f6f7" stroke="#a5a5a8" />
        <path d="M1273 242L1304 248V295L1274 284z" fill="#ececee" stroke="#a5a5a8" />
        <path d="M1304 248L1337 243L1335 284L1304 295z" fill="#e4e4e7" stroke="#a5a5a8" />
        <text x="1280" y="270" fill="#8f8f94" className="text-[9px] font-bold" transform="rotate(6 1280 270)">LEFT</text>
        <text x="1308" y="274" fill="#8f8f94" className="text-[8px] font-bold" transform="rotate(-9 1308 274)">FRONT</text>
        <path d="M1296 243l5-2M1303 241l3 1M1308 243l5-2" stroke="#a5a5a8" />
      </g>

      {/* navigation bar */}
      <g stroke="#8f8f94">
        <rect x="1355.500" y="339.500" width="32" height="108" rx="3" fill="#e2e2e4" fillOpacity="0.550" stroke="#b5b5b8" />
        <circle cx="1380.500" cy="345.500" r="3" />
        <path d="M1379 344l3 3M1382 344l-3 3" />
        <path d="M1371 358h11v9a10 10 0 1 1-11-9z" fill="#eee" />
        <circle cx="1371.500" cy="368.500" r="5" fill="#fff" />
        <path d="M1359 393h25" />
        <path d="M1368 386h6l-3 3zM1368 425h6l-3 3z" fill="#77777c" stroke="none" />
        <path d="M1364 404v-3h3M1371 401h3v3M1364 408v3h3M1366 404l6 6" />
        <circle cx="1373.500" cy="411.500" r="3.500" fill="#fff" fillOpacity="0.500" />
        <path d="M1376 414l3 3" strokeWidth="2" />
        <circle cx="1380.500" cy="440.500" r="3" />
        <path d="M1379 440.500h3" />
      </g>
    </svg>
  );
}

function Viewport() {
  return (
    <main className="flex min-w-0 flex-1 flex-col bg-[#f1eff2]">
      <div className="flex h-[21px] items-center bg-[#cfcbcf] pt-px text-[#5a585e]">
        <button className="flex items-center gap-[6px] pl-[2px]">
          <svg viewBox="0 0 16 14" className="h-[14px] w-4" fill="none" stroke="#8a888d"><path d="M1 1h7v2M1 1v10h4M6 3h6l3 3v7H6z" fill="#e4e2e6" /></svg>
          <span className="w-[142px] text-left">1F - UFL (Potable water)</span>
        </button>
        <button className="flex items-center gap-[7px]">
          <svg viewBox="0 0 16 14" className="h-[14px] w-4" fill="none" stroke="#8a888d"><path d="M8 1l6 6-6 6z" fill="#77757a" /><circle cx="7" cy="7" r="4" fill="#e4e2e6" /></svg>
          <span className="w-[109px] text-left">Fresh water station</span>
        </button>
        <div className="ml-[5px] flex h-5 w-[118px] items-center bg-white pr-1 pl-1 text-[#222]">
          <svg viewBox="0 0 16 14" className="h-[14px] w-4" fill="#d8d8de" stroke={INK}><path d="M1 6l5-5 8 3v6l-5 3-6-2V6M9 13V8l5-4M9 8L6 4 3 7" /></svg>
          <button className="ml-[6px] flex-1 text-left">{"{3D}"}</button>
          <button aria-label="Close view"><X className="h-3 w-3" strokeWidth={3} /></button>
        </div>
        <button aria-label="View list" className="ml-auto flex w-5 flex-col items-center gap-[2px]">
          <i className="h-px w-2 bg-[#333]" />
          <Caret />
        </button>
      </div>
      <div className="flex min-h-0 flex-1">
        <div className="flex min-w-0 flex-1 flex-col border-t border-white"><Scene /></div>
        <div className="flex w-[18px] items-center justify-center pt-3">
          <i className="h-[15px] w-px bg-[#77757a]" />
        </div>
      </div>
    </main>
  );
}

/* ---------- LINEAR palette ---------- */

interface DropProps {
  label: string;
  value: string;
  className: string;
  pad?: string;
  children?: ReactNode;
}

function Drop({ label, value, className, pad = "pl-[5px] pr-4", children }: DropProps) {
  return (
    <div className={`relative ${className}`}>
      <select id={label} aria-label={label} className={`block h-full w-full appearance-none border border-[#b5b3b8] bg-[#ebe9ec] ${pad}`}>
        <option>{value}</option>
      </select>
      {children}
      <ChevronDown className="pointer-events-none absolute top-[5px] right-1 h-2 w-2" strokeWidth={3} />
    </div>
  );
}

function SmallButton({ label, children }: { label: string; children: ReactNode }) {
  return (
    <button aria-label={label} className="flex h-[21px] w-[23px] shrink-0 items-center justify-center border border-[#333] bg-[#f4f2f5]">{children}</button>
  );
}

const choices: Record<string, string[]> = {
  height: ["M3 2h11M8.500 9m-4 0a4 4 0 1 0 8 0a4 4 0 1 0-8 0", "M3 8h11M8.500 8m-4 0a4 4 0 1 0 8 0a4 4 0 1 0-8 0", "M3 14h11M8.500 7m-4 0a4 4 0 1 0 8 0a4 4 0 1 0-8 0"],
  align: ["M3 2v12M9.500 8m-4 0a4 4 0 1 0 8 0a4 4 0 1 0-8 0", "M8.500 2v12M8.500 8m-4 0a4 4 0 1 0 8 0a4 4 0 1 0-8 0", "M14 2v12M7.500 8m-4 0a4 4 0 1 0 8 0a4 4 0 1 0-8 0"],
  pair: [
    "M1 2h15M4.500 8m-4 0a4 4 0 1 0 8 0a4 4 0 1 0-8 0M12.500 8m-4 0a4 4 0 1 0 8 0a4 4 0 1 0-8 0",
    "M1 8h15M4.500 8m-4 0a4 4 0 1 0 8 0a4 4 0 1 0-8 0M12.500 8m-4 0a4 4 0 1 0 8 0a4 4 0 1 0-8 0",
    "M1 14h15M4.500 8m-4 0a4 4 0 1 0 8 0a4 4 0 1 0-8 0M12.500 8m-4 0a4 4 0 1 0 8 0a4 4 0 1 0-8 0",
  ],
};

function ChoiceButtons({ kind }: { kind: string }) {
  const [picked, setPicked] = useState(1);
  return (
    <div className="flex gap-px">
      {choices[kind].map((d, i) => {
        const cut = d.indexOf("M", 1);
        return (
          <button
            key={i}
            aria-label={`${kind} option ${i + 1}`}
            onClick={() => setPicked(i)}
            className={`flex h-[21px] w-[27px] items-center justify-center border border-[#333] ${picked === i ? "bg-[#93ade0]" : "bg-[#f4f2f5]"}`}
          >
            <svg viewBox="0 0 17 16" className="h-[14px] w-[15px]" fill="none">
              <path d={d.slice(cut)} stroke="#77757a" />
              <path d={d.slice(0, cut)} stroke="#111" strokeWidth="2" />
            </svg>
          </button>
        );
      })}
    </div>
  );
}

function SectionHead({ title, toggle }: { title: string; toggle?: "up" | "down" }) {
  return (
    <div className="flex h-5 items-stretch bg-[#f1eff2]">
      <button className="flex-1 pl-[9px] text-left font-medium text-[#111]">{title} &lt;</button>
      {toggle && (
        <button aria-label={`Toggle ${title}`} className="flex w-4 items-center justify-center border-l border-[#333] bg-[#fbfafc]">
          {toggle === "up" ? <ChevronUp className="h-[10px] w-[10px]" strokeWidth={5} /> : <ChevronDown className="h-[10px] w-[10px]" strokeWidth={5} />}
        </button>
      )}
    </div>
  );
}

function PanelTabs() {
  const tab = "flex flex-1 items-center justify-center border border-[#c4c2c6]";
  return (
    <div className="flex h-[37px]">
      <button aria-label="Settings" className={tab}>
        <svg viewBox="0 0 24 28" className="h-7 w-6" stroke="#3c3c40" strokeWidth="4"><path d="M4 0v28M12 0v28M20 0v28" strokeWidth="3" /><path d="M1 15h6M9 8h6M17 15h6" /></svg>
      </button>
      <button aria-label="Draw" className="flex flex-1 items-center justify-center bg-white">
        <svg viewBox="0 0 24 24" className="h-6 w-6" fill="#333"><path d="M1 23l2-8L17 2q3-2 5 2t1 4L9 20z" /><path d="M15 5l6 6M6 14l4 4" stroke="#fff" /></svg>
      </button>
      <button aria-label="Library" className={tab}>
        <svg viewBox="0 0 24 24" className="h-6 w-6" fill="#3c3c40"><path d="M1 1h5v22H1zM7 4h4v19H7zM12 8h5v15h-5zM18 2h5v21h-5z" /><path d="M1 4h5M7 7h4M12 11h5M18 5h5M1 19h22" stroke="#f1eff2" strokeWidth="0.600" /></svg>
      </button>
      <button aria-label="Calculate" className={tab}>
        <svg viewBox="0 0 24 24" className="h-6 w-6" fill="none" stroke="#3c3c40" strokeWidth="3"><rect x="3" y="3" width="7" height="7" rx="1" /><rect x="15" y="3" width="7" height="7" rx="1" /><rect x="3" y="15" width="7" height="7" rx="1" /><rect x="15" y="15" width="7" height="7" rx="1" /><path d="M5 6.500h3M17 6.500h3M5 18.500h3M17 18.500h3" strokeWidth="2" /></svg>
      </button>
      <button aria-label="Warnings" className={tab}><TriangleAlert className="h-8 w-8 text-[#3c3c40]" /></button>
      <div className="flex w-[22px] shrink-0 flex-col items-center justify-between pb-1 pl-[6px]">
        <button aria-label="Help" className="flex h-[14px] w-[14px] items-center justify-center rounded-full border border-[#222] text-[10px] font-bold text-[#222]">?</button>
        <button aria-label="Options" className="flex h-3 w-3 items-center justify-center border border-[#222]"><Caret /></button>
      </div>
    </div>
  );
}

const parallelRows = [
  { system: "Circulation", d: "15 mm", distance: "50 mm" },
  { system: "Hot water", d: "25 mm", distance: "50 mm" },
];

const closedSections: { title: string; toggle?: "down" }[] = [
  { title: "Connect components", toggle: "down" },
  { title: "Automatic connection" },
  { title: "T-piece connection" },
  { title: "Pipe offset", toggle: "down" },
  { title: "Legend" },
];

function LinearPanel() {
  const box = "border border-[#333] bg-[#faf9fb]";
  return (
    <aside className="flex w-[371px] shrink-0 flex-col border-r border-l-2 border-[#cfcbcf] bg-[#f1eff2]">
      <div className="flex h-[22px] items-center justify-between pr-px pl-[3px]">
        <h2>LINEAR</h2>
        <button aria-label="Close panel"><X className="h-3 w-3 text-[#222]" strokeWidth={3} /></button>
      </div>
      <div className="pl-[2px]"><PanelTabs /></div>
      <div className="flex-1 bg-white bg-[linear-gradient(to_bottom,#adb094_0px,#e4e5dc_70px,#ffffff_140px)] pr-[3px] pl-[5px] text-[#2c2c30]">
        <div className="flex h-[44px] items-center gap-[10px] pl-[15px]">
          <svg viewBox="0 0 18 28" className="h-7 w-[18px]" fill="#fff"><path d="M9 0q9 14 9 19a9 9 0 0 1-18 0Q0 14 9 0z" /><path d="M12 12q3 6 1 9" stroke="#b9bba5" strokeWidth="1.500" fill="none" /></svg>
          <h3 className="text-base text-white">Potable water</h3>
        </div>
        <h4 className="mt-[5px] pl-[5px] leading-4">Construction level / Offset (+/-)</h4>
        <div className="mt-[3px] flex gap-1">
          <Drop label="Construction level" value="1F - UFL" className="h-[21px] flex-1" pad="pl-[22px] pr-4">
            <Lightbulb className="pointer-events-none absolute top-1 left-[6px] h-[13px] w-[13px] text-[#55555a]" />
          </Drop>
          <SmallButton label="Browse levels">...</SmallButton>
        </div>
        <div className="mt-[3px] flex gap-1">
          <Drop label="Reference level" value="1F - FF" className="h-[21px] flex-1" />
          <input aria-label="Offset" defaultValue="1000 mm" className="h-[21px] w-[74px] border border-[#b5b3b8] bg-white px-[2px] text-right" />
          <SmallButton label="Pick level"><Crosshair className="h-3 w-3" /></SmallButton>
        </div>
        <div className="px-[2px]">
          <label htmlFor="System class" className="mt-3 block pl-[3px] leading-4">System class</label>
          <div className="mt-[4px] flex gap-1">
            <Drop label="System class" value="Cold water" className="h-[21px] flex-1" />
            <SmallButton label="Browse classes">...</SmallButton>
            <SmallButton label="Take class">&lt;</SmallButton>
          </div>

          <section className={`mt-[10px] ${box}`}>
            <div className="border-b border-[#333]"><SectionHead title="Pipes" toggle="up" /></div>
            <div className="flex flex-col gap-1 px-[5px] pt-1 pb-[3px]">
              <div className="flex items-center justify-between">
                <label htmlFor="Manufacturer">Manufacturer</label>
                <Drop label="Manufacturer" value="Neutral pipe classes" className="h-[22px] w-[255px]" />
              </div>
              <div className="flex items-center justify-between">
                <label htmlFor="Pipe system">Pipe system</label>
                <Drop label="Pipe system" value="Standard" className="h-[22px] w-[255px]" />
              </div>
              <div className="flex items-center justify-between">
                <label htmlFor="Diameter">Diameter</label>
                <Drop label="Diameter" value="25 mm" className="h-[22px] w-[92px]" pad="pr-5 text-right [text-align-last:right]" />
              </div>
              <div className="flex h-[22px] items-center justify-between"><span>Height reference</span><ChoiceButtons kind="height" /></div>
              <div className="flex h-[22px] items-center justify-between"><span>Alignment</span><ChoiceButtons kind="align" /></div>
            </div>
          </section>

          <section className={`mt-1 ${box}`}>
            <div className="border-b border-[#333]"><SectionHead title="Parallel pipes" toggle="up" /></div>
            <table className="w-full table-fixed bg-white">
              <colgroup><col /><col className="w-[61px]" /><col className="w-[52px]" /></colgroup>
              <thead>
                <tr className="h-[21px] border-b border-[#e4e2e6]">
                  <th className="p-0 pl-[5px] text-left font-normal">System class</th>
                  <th className="border-l border-[#e4e2e6] p-0 pl-[5px] text-left font-normal">d</th>
                  <th className="border-l border-[#e4e2e6] p-0 pr-1 text-right font-normal">Distance</th>
                </tr>
              </thead>
              <tbody>
                {parallelRows.map((row) => (
                  <tr key={row.system} className="h-[21px] border-b border-[#e4e2e6]">
                    <td className="p-0 pl-[2px]">{row.system}</td>
                    <td className="p-0"><Drop label={`${row.system} diameter`} value={row.d} className="h-5 w-[61px]" /></td>
                    <td className="p-0 pr-[3px] text-right">{row.distance}</td>
                  </tr>
                ))}
              </tbody>
            </table>
            <div className="mt-1 flex items-center justify-between px-[5px]">
              <button className="h-[21px] w-[70px] border border-[#333] bg-[#f4f2f5]">Configure ...</button>
              <ChoiceButtons kind="pair" />
            </div>
            <div className="mt-[2px] flex h-4 items-center pl-[5px]">
              <label className="flex w-[173px] items-center gap-[6px]">
                <input type="radio" name="distance" defaultChecked className="h-3 w-3 appearance-none rounded-full border border-[#55555a] bg-white checked:bg-[radial-gradient(#222_0_45%,white_50%)]" />
                Clear distance
              </label>
              <label className="flex items-center gap-[6px]">
                <input type="radio" name="distance" className="h-3 w-3 appearance-none rounded-full border border-[#55555a] bg-white checked:bg-[radial-gradient(#222_0_45%,white_50%)]" />
                Axis distance
              </label>
            </div>
            <label className="mt-px mb-[3px] flex h-4 items-center gap-1 pl-[5px]">
              <input type="checkbox" className="h-[13px] w-[13px] appearance-none border border-[#55555a] bg-white checked:bg-[#333]" />
              Select guide pipe in link
            </label>
          </section>

          <div className="mt-1 flex flex-col gap-[2px]">
            {closedSections.map((s) => (
              <section key={s.title} className={box}><SectionHead title={s.title} toggle={s.toggle} /></section>
            ))}
          </div>
        </div>
      </div>
    </aside>
  );
}

/* ---------- player ---------- */

function Player() {
  const [time, setTime] = useState(527);
  const length = 565;
  return (
    <footer className="flex h-[52px] shrink-0 items-center bg-white pr-3 pl-[5px]">
      <button aria-label="Play" className="flex h-[42px] w-[42px] items-center justify-center rounded-full bg-[#1a3c44]">
        <svg viewBox="0 0 20 22" className="ml-1 h-[22px] w-5" fill="#fff"><path d="M0 0l20 11L0 22z" /></svg>
      </button>
      <span className="ml-[19px] w-[77px] font-['Open_Sans'] text-[10px] text-[#222]">08:44 / 09:25</span>
      <input
        type="range"
        aria-label="Seek"
        min={0}
        max={length}
        value={time}
        onChange={(e) => setTime(Number(e.target.value))}
        style={{ backgroundSize: `${(time / length) * 100}% 100%` }}
        className="h-1 flex-1 appearance-none bg-[#dcdcdc] bg-[linear-gradient(#1a3c44,#1a3c44)] bg-no-repeat [&::-webkit-slider-thumb]:h-[13px] [&::-webkit-slider-thumb]:w-[13px] [&::-webkit-slider-thumb]:appearance-none [&::-webkit-slider-thumb]:rounded-full [&::-webkit-slider-thumb]:bg-[#1a3c44]"
      />
      <div className="ml-[100px] flex w-[161px] items-center justify-between">
        <button aria-label="Settings">
          <svg viewBox="0 0 24 24" className="h-[22px] w-[22px]" fill="none" stroke="#333" strokeWidth="1.500" strokeLinejoin="round">
            <path d="M10 2h4l.5 3 2 1 2.500-2 2.500 3-2 2.500.5 2 3 .5v3l-3 .5-1 2 2 2.500-3 2.500-2.500-2-1.500.5-.5 3h-3.500l-.5-3-2-1-2.500 2-2.500-3 2-2.500-.5-2-3-.5v-3l3-.5 1-2-2-2.500 3-2.500 2.500 2 1.500-.5z" />
            <path d="M9 15a4 4 0 1 1 6 0" />
          </svg>
        </button>
        <button aria-label="Speed">
          <svg viewBox="0 0 28 16" className="h-4 w-7" fill="none" stroke="#333" strokeWidth="1.500"><path d="M18 2l9 6-9 6z" /><path d="M14 4l-4-2v12l4-2" /><path d="M6 4L2 2v12l4-2" stroke="#999" /></svg>
        </button>
        <button aria-label="Volume">
          <svg viewBox="0 0 30 26" className="h-[26px] w-[30px]" fill="none" stroke="#333" strokeWidth="1.500"><path d="M5 9l8-6v20l-8-6H1V9zM5 9v8M17 9q4 4 0 8M20 5q7 8 0 16M24 2q10 11 0 22" /></svg>
        </button>
        <button aria-label="Exit full screen">
          <svg viewBox="0 0 20 20" className="h-5 w-5" fill="none" stroke="#333" strokeWidth="2"><path d="M19 1l-7 7M12 3v5h5M1 19l7-7M3 12h5v5" /></svg>
        </button>
      </div>
    </footer>
  );
}

export default function App() {
  return (
    <div className="flex h-screen flex-col overflow-hidden bg-[#cfcbcf] font-[Roboto,'Open_Sans',sans-serif] text-[11px] leading-[14px] text-[#3c3c40]">
      <div className="shrink-0">
        <TitleBar />
        <Ribbon />
      </div>
      <div className="flex min-h-0 flex-1 border-t border-[#cfcbcf]">
        <Properties />
        <Viewport />
        <LinearPanel />
      </div>
      <Player />
    </div>
  );
}
